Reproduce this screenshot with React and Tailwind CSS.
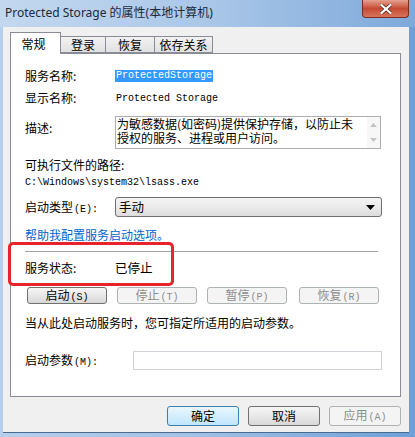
import React from "react";

const cjk = "font-['Microsoft_YaHei','Noto_Sans_CJK_SC',sans-serif]";
const mono = "font-['Liberation_Mono','Noto_Sans_CJK_SC',monospace]";

function Btn({ children, w = "w-[80px]", disabled, primary, className = "" }) {
  let cls =
    "h-[17px] flex items-center justify-center rounded-[3px] border text-[12px] leading-none ";
  if (primary)
    cls += "border-[#3c7fb1] bg-gradient-to-b from-[#eaf6fd] to-[#bee6fd] text-black ";
  else if (disabled)
    cls += "border-[#adb2b5] bg-[#f4f4f4] text-[#8d8d8d] ";
  else
    cls += "border-[#707070] bg-gradient-to-b from-[#f6f6f6] via-[#e8e8e8] to-[#d8d8d8] text-black ";
  return <div className={cls + w + " " + className}>{children}</div>;
}

function Lbl({ cn, en }) {
  return (
    <span className="flex items-baseline">
      <span className={cjk}>{cn}</span>
      {en && <span className={mono + " text-[10px] ml-[1px]"}>{en}</span>}
    </span>
  );
}

export default function App() {
  return (
    <div className="relative w-[415px] h-[437px] overflow-hidden flex flex-col bg-gradient-to-r from-[#b7cfeb] via-[#9fbfe4] to-[#6e9fd6] text-black">
      {/* title bar */}
      <div className="h-[27px] flex items-center pl-[5px] pb-[1px] bg-gradient-to-r from-[#c3d8ef] via-[#aac7e8] to-[#7ea9da]">
        <span className={"text-[12px] text-[#1b2a3c] font-['Noto_Sans','Noto_Sans_CJK_SC',sans-serif]"}>
          Protected Storage 的属性(本地计算机)
        </span>
      </div>
      <div className="absolute left-[362px] top-0 w-[47px] h-[18px] rounded-b-[4px] border border-t-0 border-[#7a2e22] bg-gradient-to-b from-[#e3a08e] via-[#c54a33] to-[#d9735a] flex items-center justify-center">
        <svg width="12" height="10" viewBox="0 0 12 10">
          <path d="M1.5 1 L10.5 9 M10.5 1 L1.5 9" stroke="#3a1a14" strokeWidth="3.4" strokeLinecap="square" />
          <path d="M1.5 1 L10.5 9 M10.5 1 L1.5 9" stroke="#ffffff" strokeWidth="2.2" strokeLinecap="square" />
        </svg>
      </div>

      {/* client area */}
      <div className={"ml-[3px] mr-[6px] h-[406px] bg-[#f0f0f0] border-b border-[#4a6b90] pl-[7px] pt-[5px] flex flex-col " + cjk}>
        {/* tabs */}
        <div className="h-[21px] flex items-end relative z-10">
          <div className="w-[51px] bg-white border border-b-0 border-[#898c95] text-[12px] flex justify-center pt-[2px] pr-[4px] -mb-px h-[22px]">
            常规
          </div>
          <div className="w-[45px] h-[17px] border border-l-0 border-[#898c95] bg-gradient-to-b from-[#f2f2f2] to-[#e1e1e1] text-[12px] flex justify-center items-center">
            登录
          </div>
          <div className="w-[49px] h-[17px] border border-l-0 border-[#898c95] bg-gradient-to-b from-[#f2f2f2] to-[#e1e1e1] text-[12px] flex justify-center items-center">
            恢复
          </div>
          <div className="w-[58px] h-[17px] border border-l-0 border-[#898c95] bg-gradient-to-b from-[#f2f2f2] to-[#e1e1e1] text-[12px] flex justify-center items-center">
            依存关系
          </div>
        </div>

        {/* panel */}
        <div className="w-[391px] h-[344px] border border-[#898c95] bg-white flex flex-col pl-[14px] text-[12px]">
          <div className="mt-[14px] h-[16px] flex items-center">
            <div className="w-[90px]">服务名称:</div>
            <span className={mono + " text-[10px] bg-[#3399ff] text-white px-[1px] h-[12px] leading-[12px]"}>
              ProtectedStorage
            </span>
          </div>
          <div className="mt-[6px] h-[16px] flex items-center">
            <div className="w-[90px]">显示名称:</div>
            <span className={mono + " text-[10px] pl-[1px]"}>Protected Storage</span>
          </div>
          <div className="mt-[10px] h-[33px] flex">
            <div className="w-[90px] pt-[3px]">描述:</div>
            <div className="w-[266px] h-[33px] border border-[#abadb3] flex">
              <div className="flex-1 pl-[1px] text-[12px] leading-[14px] whitespace-nowrap">
                为敏感数据(如密码)提供保护存储，以防止未
                <br />
                授权的服务、进程或用户访问。
              </div>
              <div className="w-[13px] bg-[#f7f7f7] flex flex-col justify-between items-center py-[6px]">
                <svg width="7" height="4" viewBox="0 0 7 4"><path d="M0 4 L3.5 0 L7 4 Z" fill="#c4c4c4" /></svg>
                <svg width="7" height="4" viewBox="0 0 7 4"><path d="M0 0 L3.5 4 L7 0 Z" fill="#c4c4c4" /></svg>
              </div>
            </div>
          </div>
          <div className="mt-[8px] h-[16px] flex items-center">可执行文件的路径:</div>
          <div className={"mt-[1px] h-[16px] flex items-center text-[10px] " + mono}>
            C:\Windows\system32\lsass.exe
          </div>
          <div className="mt-[7px] h-[20px] flex items-center">
            <div className="w-[90px]">
              <Lbl cn="启动类型" en="(E):" />
            </div>
            <div className="w-[267px] h-[20px] rounded-[3px] border border-[#707070] bg-gradient-to-b from-[#f4f4f4] via-[#ebebeb] to-[#dcdcdc] flex items-center justify-between pl-[3px] pr-[6px]">
              <span className="text-[12.5px]">手动</span>
              <svg width="9" height="5" viewBox="0 0 9 5"><path d="M0 0 L9 0 L4.5 5 Z" fill="#000" /></svg>
            </div>
          </div>
          <div className="mt-[10px] h-[16px] flex items-center text-[#0066cc]">帮助我配置服务启动选项。</div>
          <div className="mt-[8px] h-px w-[353px] bg-[#a0a0a0]" />
          <div className="mt-[8px] h-[16px] flex items-center">
            <div className="w-[90px]">服务状态:</div>
            <span className="text-[12.5px]">已停止</span>
          </div>
          <div className="mt-[11px] flex">
            <Btn className="ml-[2px]">
              <Lbl cn="启动" en="(S)" />
            </Btn>
            <Btn disabled className="ml-[10px]">
              <Lbl cn="停止" en="(T)" />
            </Btn>
            <Btn disabled className="ml-[10px]">
              <Lbl cn="暂停" en="(P)" />
            </Btn>
            <Btn disabled className="ml-[12px]">
              <Lbl cn="恢复" en="(R)" />
            </Btn>
          </div>
          <div className="mt-[11px] h-[16px] flex items-center">当从此处启动服务时，您可指定所适用的启动参数。</div>
          <div className="mt-[20px] h-[19px] flex items-center">
            <div className="w-[108px]">
              <Lbl cn="启动参数" en="(M):" />
            </div>
            <div className="w-[249px] h-[19px] border border-[#d0d3d8] bg-white" />
          </div>
        </div>

        {/* bottom buttons */}
        <div className="mt-[9px] w-[391px] flex justify-end gap-[9px]">
          <Btn primary w="w-[72px] h-[20px]">确定</Btn>
          <Btn w="w-[72px] h-[20px]">取消</Btn>
          <Btn disabled w="w-[72px] h-[20px]">
            <Lbl cn="应用" en="(A)" />
          </Btn>
        </div>
      </div>

      {/* red annotation */}
      <div className="absolute left-[8px] top-[242px] w-[166px] h-[44px] border-[3px] border-[#e8232b] rounded-[5px]" />
    </div>
  );
}
